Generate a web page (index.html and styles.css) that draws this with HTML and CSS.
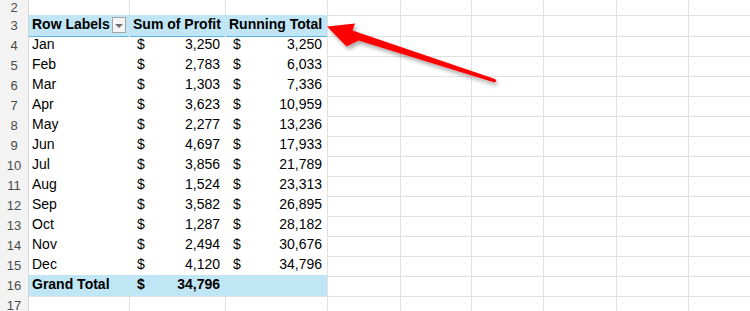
FILE: index.html
```html
<!DOCTYPE html>
<html>
<head>
<meta charset="utf-8">
<link rel="stylesheet" href="styles.css">
</head>
<body>
<div class="page">
  <div class="sheet">
    <div class="row short"><div class="rh">2</div><div class="c"></div><div class="c"></div><div class="c"></div><div class="c"></div><div class="c"></div><div class="c"></div><div class="c"></div><div class="c"></div><div class="c"></div></div>
    <div class="row"><div class="rh">3</div><div class="c hd hdl hdf"><span class="b">Row Labels</span><span class="dd"><span class="tri"></span></span></div><div class="c hd hdl"><span class="b">Sum of Profit</span></div><div class="c hd hdc"><span class="b">Running Total</span></div><div class="c"></div><div class="c"></div><div class="c"></div><div class="c"></div><div class="c"></div><div class="c"></div></div>
    <div class="row"><div class="rh">4</div><div class="c pv">Jan</div><div class="c pv acc"><span>$</span><span>3,250</span></div><div class="c pv pvc acc"><span>$</span><span>3,250</span></div><div class="c"></div><div class="c"></div><div class="c"></div><div class="c"></div><div class="c"></div><div class="c"></div></div>
    <div class="row"><div class="rh">5</div><div class="c pv">Feb</div><div class="c pv acc"><span>$</span><span>2,783</span></div><div class="c pv pvc acc"><span>$</span><span>6,033</span></div><div class="c"></div><div class="c"></div><div class="c"></div><div class="c"></div><div class="c"></div><div class="c"></div></div>
    <div class="row"><div class="rh">6</div><div class="c pv">Mar</div><div class="c pv acc"><span>$</span><span>1,303</span></div><div class="c pv pvc acc"><span>$</span><span>7,336</span></div><div class="c"></div><div class="c"></div><div class="c"></div><div class="c"></div><div class="c"></div><div class="c"></div></div>
    <div class="row"><div class="rh">7</div><div class="c pv">Apr</div><div class="c pv acc"><span>$</span><span>3,623</span></div><div class="c pv pvc acc"><span>$</span><span>10,959</span></div><div class="c"></div><div class="c"></div><div class="c"></div><div class="c"></div><div class="c"></div><div class="c"></div></div>
    <div class="row"><div class="rh">8</div><div class="c pv">May</div><div class="c pv acc"><span>$</span><span>2,277</span></div><div class="c pv pvc acc"><span>$</span><span>13,236</span></div><div class="c"></div><div class="c"></div><div class="c"></div><div class="c"></div><div class="c"></div><div class="c"></div></div>
    <div class="row"><div class="rh">9</div><div class="c pv">Jun</div><div class="c pv acc"><span>$</span><span>4,697</span></div><div class="c pv pvc acc"><span>$</span><span>17,933</span></div><div class="c"></div><div class="c"></div><div class="c"></div><div class="c"></div><div class="c"></div><div class="c"></div></div>
    <div class="row"><div class="rh">10</div><div class="c pv">Jul</div><div class="c pv acc"><span>$</span><span>3,856</span></div><div class="c pv pvc acc"><span>$</span><span>21,789</span></div><div class="c"></div><div class="c"></div><div class="c"></div><div class="c"></div><div class="c"></div><div class="c"></div></div>
    <div class="row"><div class="rh">11</div><div class="c pv">Aug</div><div class="c pv acc"><span>$</span><span>1,524</span></div><div class="c pv pvc acc"><span>$</span><span>23,313</span></div><div class="c"></div><div class="c"></div><div class="c"></div><div class="c"></div><div class="c"></div><div class="c"></div></div>
    <div class="row"><div class="rh">12</div><div class="c pv">Sep</div><div class="c pv acc"><span>$</span><span>3,582</span></div><div class="c pv pvc acc"><span>$</span><span>26,895</span></div><div class="c"></div><div class="c"></div><div class="c"></div><div class="c"></div><div class="c"></div><div class="c"></div></div>
    <div class="row"><div class="rh">13</div><div class="c pv">Oct</div><div class="c pv acc"><span>$</span><span>1,287</span></div><div class="c pv pvc acc"><span>$</span><span>28,182</span></div><div class="c"></div><div class="c"></div><div class="c"></div><div class="c"></div><div class="c"></div><div class="c"></div></div>
    <div class="row"><div class="rh">14</div><div class="c pv">Nov</div><div class="c pv acc"><span>$</span><span>2,494</span></div><div class="c pv pvc acc"><span>$</span><span>30,676</span></div><div class="c"></div><div class="c"></div><div class="c"></div><div class="c"></div><div class="c"></div><div class="c"></div></div>
    <div class="row"><div class="rh">15</div><div class="c pv last">Dec</div><div class="c pv last acc"><span>$</span><span>4,120</span></div><div class="c pv pvc last acc"><span>$</span><span>34,796</span></div><div class="c"></div><div class="c"></div><div class="c"></div><div class="c"></div><div class="c"></div><div class="c"></div></div>
    <div class="row"><div class="rh">16</div><div class="c gt b">Grand Total</div><div class="c gt b acc"><span>$</span><span>34,796</span></div><div class="c gt gtc"></div><div class="c"></div><div class="c"></div><div class="c"></div><div class="c"></div><div class="c"></div><div class="c"></div></div>
    <div class="row"><div class="rh">17</div><div class="c"></div><div class="c"></div><div class="c"></div><div class="c"></div><div class="c"></div><div class="c"></div><div class="c"></div><div class="c"></div><div class="c"></div></div>
  </div>
  <svg class="arrow" width="750" height="311" viewBox="0 0 750 311">
    <defs>
      <filter id="sh" x="-20%" y="-50%" width="140%" height="200%">
        <feGaussianBlur in="SourceAlpha" stdDeviation="2"/>
        <feOffset dx="2" dy="3" result="b"/>
        <feComponentTransfer><feFuncA type="linear" slope="0.35"/></feComponentTransfer>
        <feMerge><feMergeNode/><feMergeNode in="SourceGraphic"/></feMerge>
      </filter>
    </defs>
    <polygon filter="url(#sh)" fill="#fe0000" points="327,26.5 355,23.5 352.5,30.5 495,79 496.5,81 494.5,82.5 358.5,40.5 346.5,46.5"/>
  </svg>
</div>
</body>
</html>
```
FILE: styles.css
```css
html, body {
  margin: 0;
  padding: 0;
  background: #ffffff;
  overflow: hidden;
}
.page {
  position: relative;
  width: 750px;
  height: 311px;
  overflow: hidden;
  font-family: "Liberation Sans", Arial, sans-serif;
  font-size: 14px;
  color: #000;
}
.row {
  display: grid;
  grid-template-columns: 29px 101px 96px 102px 73px 71px 72px 73px 72px 120px;
  height: 20px;
}
.row.short {
  height: 15px;
}
.rh {
  box-sizing: border-box;
  background: #f3f3f3;
  border-right: 1px solid #d6d6d6;
  border-bottom: 1px solid #dcdcdc;
  color: #4a4a4a;
  font-size: 13px;
  line-height: 21px;
  text-align: center;
}
.short .rh {
  line-height: 15px;
}
.c {
  box-sizing: border-box;
  border-right: 1px solid #e1e1e1;
  border-bottom: 1px solid #e1e1e1;
  line-height: 19px;
  padding-left: 3px;
  white-space: nowrap;
  overflow: hidden;
}
.b { font-weight: bold; }
.hd {
  background: #c0e6f5;
  border-bottom-color: #5db7e2;
}
.hdl {
  border-right-color: #c0e6f5;
}
.hdf {
  display: flex;
  align-items: flex-start;
  justify-content: space-between;
  padding-right: 3px;
}
.dd {
  box-sizing: border-box;
  width: 14px;
  height: 16px;
  margin-top: 2px;
  border: 1px solid #a3a3a3;
  background: #f4f4f4;
  display: flex;
  align-items: center;
  justify-content: center;
}
.tri {
  width: 0;
  height: 0;
  border-left: 4px solid transparent;
  border-right: 4px solid transparent;
  border-top: 4px solid #6f6f6f;
  margin-top: 1px;
}
.pv {
  border-right-color: #ffffff;
  border-bottom-color: #ffffff;
}
.pvc {
  border-right-color: #e1e1e1;
}
.last {
  border-bottom-color: #5db7e2;
}
.acc {
  display: flex;
  justify-content: space-between;
  padding-left: 7px;
  padding-right: 5px;
}
.gt {
  background: #c0e6f5;
  border-right-color: #c0e6f5;
}
.gtc {
  border-right-color: #e1e1e1;
}
.arrow {
  position: absolute;
  left: 0;
  top: 0;
  pointer-events: none;
}
```
